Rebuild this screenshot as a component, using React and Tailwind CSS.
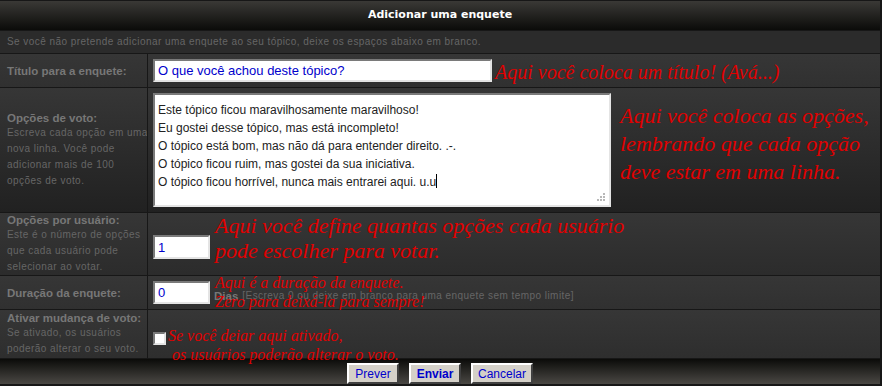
import React from 'react';

const cell = 'bg-[linear-gradient(180deg,#363636,#212121_124px)]';
const label = "font-['Liberation_Sans',sans-serif] text-[11.5px] font-bold text-[#777] leading-[14px] whitespace-nowrap";
const desc = "font-['Liberation_Sans',sans-serif] text-[10px] text-[#666] tracking-[0.45px] leading-[16px] whitespace-nowrap";
const note = "font-['Liberation_Serif',serif] italic text-[#e00000] whitespace-nowrap";
const field = 'bg-white border-2 border-t-[#7a7a7a] border-l-[#7a7a7a] border-b-[#e4e4e4] border-r-[#e4e4e4] outline-none';
const btn = "h-[21px] bg-[#d4d0c8] border-2 border-t-white border-l-white border-b-[#404040] border-r-[#404040] font-['Liberation_Sans',sans-serif] text-[12px] text-[#0000cc]";

const options = [
  'Este tópico ficou maravilhosamente maravilhoso!',
  'Eu gostei desse tópico, mas está incompleto!',
  'O tópico está bom, mas não dá para entender direito. .-.',
  'O tópico ficou ruim, mas gostei da sua iniciativa.',
  'O tópico ficou horrível, nunca mais entrarei aqui. u.u',
];

function Row({ h, left, children }) {
  return (
    <div className={`flex gap-px ${h}`}>
      <div className={`w-[147px] shrink-0 flex flex-col justify-center pl-[7px] overflow-hidden ${cell}`}>{left}</div>
      <div className={`flex-1 flex items-center pl-[5px] relative ${cell}`}>{children}</div>
    </div>
  );
}

function Lines({ lines }) {
  return (
    <span className={desc}>
      {lines.map((l, i) => (
        <span key={i} className="block">{l}</span>
      ))}
    </span>
  );
}

export default function App() {
  return (
    <div className="w-[882px] h-[386px] bg-[#171717] pt-px pr-[2px] pb-[2px] flex flex-col gap-px overflow-hidden">
      {/* Header */}
      <div className="h-[29px] shrink-0 flex items-center justify-center bg-[linear-gradient(180deg,#3a3936,#0b0b09)]">
        <span className="font-['DejaVu_Sans',sans-serif] text-[11px] font-bold text-white">Adicionar uma enquete</span>
      </div>

      {/* Info */}
      <div className="h-[22px] shrink-0 flex items-center pl-[7px] bg-[#2b2b2b]">
        <span className={desc + ' tracking-[0.15px] text-[#6a6a6a]'}>Se você não pretende adicionar uma enquete ao seu tópico, deixe os espaços abaixo em branco.</span>
      </div>

      <Row h="h-[33px]" left={<span className={label}>Título para a enquete:</span>}>
        <input
          className={`${field} w-[339px] h-[23px] px-[3px] font-['Liberation_Sans',sans-serif] text-[13px] text-[#0000cc]`}
          defaultValue="O que você achou deste tópico?"
        />
        <span className={`${note} text-[20px] ml-[3px] mt-[2px]`}>Aqui você coloca um título! (Avá...)</span>
      </Row>

      <Row
        h="h-[124px]"
        left={
          <>
            <span className={label}>Opções de voto:</span>
            <Lines lines={['Escreva cada opção em uma', 'nova linha. Você pode', 'adicionar mais de 100', 'opções de voto.']} />
          </>
        }
      >
        <div className={`${field} w-[458px] h-[114px] pl-[3px] pt-[6px] relative font-['Liberation_Sans',sans-serif] text-[12px] text-[#222] leading-[18px]`}>
          {options.map((o, i) => (
            <div key={i}>
              {o}
              {i === options.length - 1 && <span className="inline-block w-px h-[14px] bg-black align-[-2px]" />}
            </div>
          ))}
          <svg className="absolute right-[3px] bottom-[3px]" width="9" height="9" viewBox="0 0 9 9">
            <g fill="#b8b8b8">
              <rect x="6" y="0" width="2" height="2" />
              <rect x="3" y="3" width="2" height="2" />
              <rect x="6" y="3" width="2" height="2" />
              <rect x="0" y="6" width="2" height="2" />
              <rect x="3" y="6" width="2" height="2" />
              <rect x="6" y="6" width="2" height="2" />
            </g>
          </svg>
        </div>
        <div className={`${note} text-[22px] leading-[28px] ml-[9px] -mt-[12px]`}>
          <div>Aqui você coloca as opções,</div>
          <div>lembrando que cada opção</div>
          <div>deve estar em uma linha.</div>
        </div>
      </Row>

      <Row
        h="h-[62px]"
        left={
          <>
            <span className={label}>Opções por usuário:</span>
            <Lines lines={['Este é o número de opções', 'que cada usuário pode', 'selecionar ao votar.']} />
          </>
        }
      >
        <input
          className={`${field} w-[57px] h-[24px] px-[3px] mt-[6px] font-['Liberation_Sans',sans-serif] text-[13px] text-[#0000cc]`}
          defaultValue="1"
        />
        <div className={`${note} text-[22px] leading-[25px] ml-[5px] -mt-[12px]`}>
          <div>Aqui você define quantas opções cada usuário</div>
          <div>pode escolher para votar.</div>
        </div>
      </Row>

      <Row h="h-[33px]" left={<span className={label}>Duração da enquete:</span>}>
        <input
          className={`${field} w-[57px] h-[23px] px-[3px] font-['Liberation_Sans',sans-serif] text-[13px] text-[#0000cc]`}
          defaultValue="0"
        />
        <span className={`${label} ml-[4px] mt-[6px]`}>Dias</span>
        <span className={`${desc} ml-[4px] mt-[6px] tracking-[0.4px]`}>[Escreva 0 ou deixe em branco para uma enquete sem tempo limite]</span>
        <div className={`${note} absolute left-[67px] top-[-3px] text-[16px] leading-[19px]`}>
          <div>Aqui é a duração da enquete.</div>
          <div>Zero para deixá-la para sempre!</div>
        </div>
      </Row>

      <Row
        h="h-[48px]"
        left={
          <>
            <span className={label}>Ativar mudança de voto:</span>
            <Lines lines={['Se ativado, os usuários', 'poderão alterar o seu voto.']} />
          </>
        }
      >
        <span className={`${field} w-[13px] h-[13px] mt-[8px]`} />
        <div className={`${note} absolute left-[20px] top-[16px] text-[16px] leading-[19px] z-10`}>
          <div>Se você deiar aqui ativado,</div>
          <div>&nbsp;os usuários poderão alterar o voto.</div>
        </div>
      </Row>

      {/* Footer */}
      <div className="h-[25px] shrink-0 flex items-start justify-center gap-[10px] pt-[4px] bg-[linear-gradient(180deg,#0b0b09,#4a4844)]">
        <button className={`${btn} w-[52px]`}>Prever</button>
        <button className={`${btn} w-[52px] font-bold`}>Enviar</button>
        <button className={`${btn} w-[62px]`}>Cancelar</button>
      </div>
    </div>
  );
}
